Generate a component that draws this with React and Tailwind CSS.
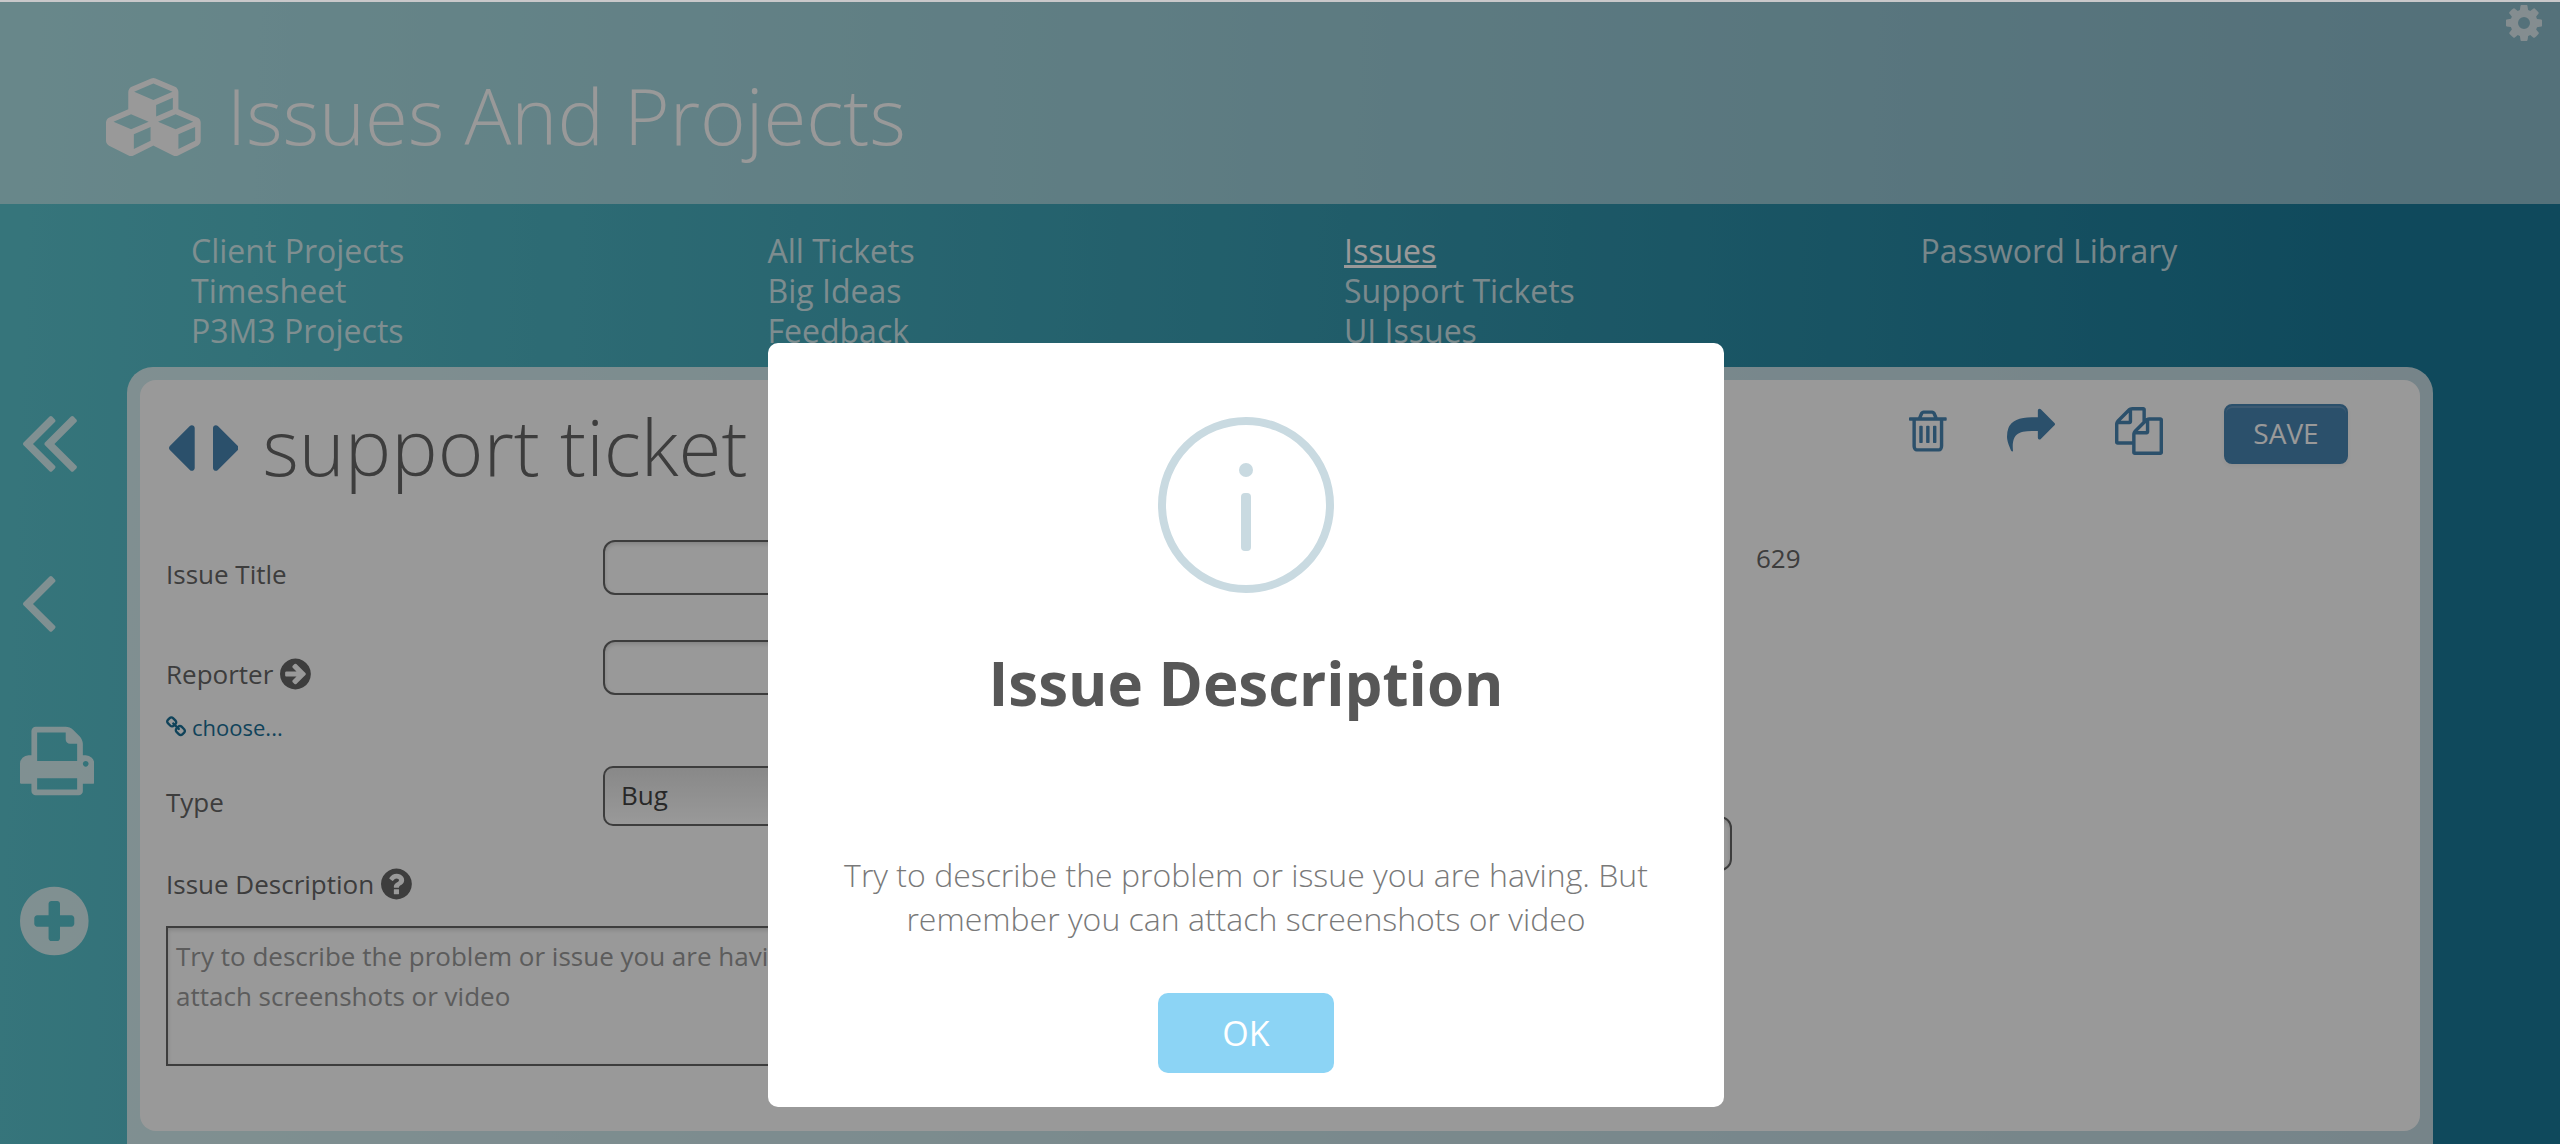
import React, { useState } from 'react';

const disc =
  'M1664 896q0 209-103 385.5t-279.5 279.5-385.5 103-385.5-103-279.5-279.5-103-385.5 103-385.5 279.5-279.5 385.5-103 385.5 103 279.5 279.5 103 385.5z';

// [viewBox, path]
const icons = {
  cubes: ['0 0 2176 1792', 'M640 1632l384-192v-314l-384 164v342zm-64-454l404-173-404-173-404 173zm1088 454l384-192v-314l-384 164v342zm-64-454l404-173-404-173-404 173zm-448-293l384-165v-266l-384 164v267zm-64-379l441-189-441-189-441 189zm1088 518v416q0 36-19 67t-52 47l-448 224q-25 14-57 14t-57-14l-448-224q-4-2-7-4-2 2-7 4l-448 224q-25 14-57 14t-57-14l-448-224q-33-16-52-47t-19-67v-416q0-38 21.5-70t56.5-48l434-186v-400q0-38 21.5-70t56.5-48l448-192q23-10 50-10t50 10l448 192q35 16 56.5 48t21.5 70v400l434 186q36 16 57 48t21 70z'],
  cog: ['128 0 1536 1792', 'M1152 896q0-106-75-181t-181-75-181 75-75 181 75 181 181 75 181-75 75-181zm512-109v222q0 12-8 23t-20 13l-185 28q-19 54-39 91 35 50 107 138 10 12 10 25t-9 23q-27 37-99 108t-94 71q-12 0-26-9l-138-108q-44 23-91 38-16 136-29 186-7 28-36 28h-222q-14 0-24.5-8.5t-11.5-21.5l-28-184q-49-16-90-37l-141 107q-10 9-25 9-14 0-25-11-126-114-165-168-7-10-7-23 0-12 8-23 15-21 51-66.5t54-70.5q-27-50-41-99l-183-27q-13-2-21-12.5t-8-23.5v-222q0-12 8-23t19-13l186-28q14-46 39-92-40-57-107-138-10-12-10-24 0-10 9-23 26-36 98.5-107.5t94.5-71.5q13 0 26 10l138 107q44-23 91-38 16-136 29-186 7-28 36-28h222q14 0 24.5 8.5t11.5 21.5l28 184q49 16 90 37l142-107q9-9 24-9 13 0 25 10 129 119 165 170 7 8 7 22 0 12-8 23-15 21-51 66.5t-54 70.5q26 50 41 98l183 28q13 2 21 12.5t8 23.5z'],
  angleDoubleLeft: ['535 191 1088 1434', 'M1171 1376q0 13-10 23l-50 50q-10 10-23 10t-23-10l-466-466q-10-10-10-23t10-23l466-466q10-10 23-10t23 10l50 50q10 10 10 23t-10 23l-393 393 393 393q10 10 10 23zm384 0q0 13-10 23l-50 50q-10 10-23 10t-23-10l-466-466q-10-10-10-23t10-23l466-466q10-10 23-10t23 10l50 50q10 10 10 23t-10 23l-393 393 393 393q10 10 10 23z'],
  angleLeft: ['567 191 700 1434', 'M1203 544q0 13-10 23l-393 393 393 393q10 10 10 23t-10 23l-50 50q-10 10-23 10t-23-10l-466-466q-10-10-10-23t10-23l466-466q10-10 23-10t23 10l50 50q10 10 10 23z'],
  print: ['64 0 1664 1792', 'M448 1536h896v-256h-896v256zm0-640h896v-384h-160q-40 0-68-28t-28-68v-160h-640v640zm1152 64q0-26-19-45t-45-19-45 19-19 45 19 45 45 19 45-19 19-45zm128 0v416q0 13-9.5 22.5t-22.5 9.5h-224v160q0 40-28 68t-68 28h-960q-40 0-68-28t-28-68v-160h-224q-13 0-22.5-9.5t-9.5-22.5v-416q0-79 56.5-135.5t135.5-56.5h64v-544q0-40 28-68t68-28h672q40 0 88 20t76 48l152 152q28 28 48 76t20 88v256h64q79 0 135.5 56.5t56.5 135.5z'],
  plusCircle: ['128 0 1536 1792', 'M1344 960v-128q0-26-19-45t-45-19h-256v-256q0-26-19-45t-45-19h-128q-26 0-45 19t-19 45v256h-256q-26 0-45 19t-19 45v128q0 26 19 45t45 19h256v256q0 26 19 45t45 19h128q26 0 45-19t19-45v-256h256q26 0 45-19t19-45z' + disc],
  caretLeft: ['640 0 576 1792', 'M1216 448v896q0 26-19 45t-45 19-45-19l-448-448q-19-19-19-45t19-45l448-448q19-19 45-19t45 19 19 45z'],
  caretRight: ['576 0 576 1792', 'M1152 896q0 26-19 45l-448 448q-19 19-45 19t-45-19-19-45v-896q0-26 19-45t45-19 45 19l448 448q19 19 19 45z'],
  arrowCircle: ['128 0 1536 1792', 'M1413 896q0-27-18-45l-91-91-362-362q-18-18-45-18t-45 18l-91 91q-18 18-18 45t18 45l189 189h-502q-26 0-45 19t-19 45v128q0 26 19 45t45 19h502l-189 189q-19 19-19 45t19 45l91 91q18 18 45 18t45-18l362-362 91-91q18-18 18-45z' + disc],
  questionCircle: ['128 0 1536 1792', 'M1024 1376v-192q0-14-9-23t-23-9h-192q-14 0-23 9t-9 23v192q0 14 9 23t23 9h192q14 0 23-9t9-23zm256-672q0-88-55.5-163t-138.5-116-170-41q-243 0-371 213-15 24 8 42l132 100q7 6 19 6 16 0 25-12 53-68 86-92 34-24 86-24 48 0 85.5 26t37.5 59q0 38-20 61t-68 45q-63 28-115.5 86.5t-52.5 125.5v36q0 14 9 23t23 9h192q14 0 23-9t9-23q0-19 21.5-49.5t54.5-49.5q32-18 49-28.5t46-35 44.5-48 28-60.5 12.5-81z' + disc],
  link: ['80 0 1632 1792', 'M1520 1216q0-40-28-68l-208-208q-28-28-68-28-42 0-72 32 3 3 19 18.5t21.5 21.5 15 19 13 25.5 3.5 27.5q0 40-28 68t-68 28q-15 0-27.5-3.5t-25.5-13-19-15-21.5-21.5-18.5-19q-33 31-33 73 0 40 28 68l206 207q27 27 68 27 40 0 68-26l147-146q28-28 28-67zm-703-705q0-40-28-68l-206-207q-28-28-68-28-39 0-68 27l-147 146q-28 28-28 67 0 40 28 68l208 208q27 27 68 27 42 0 72-31-3-3-19-18.5t-21.5-21.5-15-19-13-25.5-3.5-27.5q0-40 28-68t68-28q15 0 27.5 3.5t25.5 13 19 15 21.5 21.5 18.5 19q33-31 33-73zm895 705q0 120-85 203l-147 146q-83 83-203 83-121 0-204-85l-206-207q-83-83-83-203 0-123 88-209l-88-88q-86 88-208 88-120 0-204-84l-208-208q-84-84-84-204t85-203l147-146q83-83 203-83 121 0 204 85l206 207q83 83 83 203 0 123-88 209l88 88q86-88 208-88 120 0 204 84l208 208q84 84 84 204z'],
  trash: ['192 0 1408 1792', 'M704 736v576q0 14-9 23t-23 9h-64q-14 0-23-9t-9-23v-576q0-14 9-23t23-9h64q14 0 23 9t9 23zm256 0v576q0 14-9 23t-23 9h-64q-14 0-23-9t-9-23v-576q0-14 9-23t23-9h64q14 0 23 9t9 23zm256 0v576q0 14-9 23t-23 9h-64q-14 0-23-9t-9-23v-576q0-14 9-23t23-9h64q14 0 23 9t9 23zm128 724v-948h-896v948q0 22 7 40.5t14.5 27 10.5 8.5h832q3 0 10.5-8.5t14.5-27 7-40.5zm-672-1076h448l-48-117q-7-9-17-11h-317q-10 2-17 11zm928 32v64q0 14-9 23t-23 9h-96v948q0 83-47 143.5t-113 60.5h-832q-66 0-113-58.5t-47-141.5v-952h-96q-14 0-23-9t-9-23v-64q0-14 9-23t23-9h309l70-167q15-37 54-63t79-26h320q40 0 79 26t54 63l70 167h309q14 0 23 9t9 23z'],
  share: ['0 0 1792 1792', 'M1792 640q0 26-19 45l-512 512q-19 19-45 19t-45-19-19-45v-256h-224q-98 0-175.5 6t-154 21.5-133 42.5-105.5 69.5-80 101-48.5 138.5-17.5 181q0 55 5 123 0 6 2.5 23.5t2.5 26.5q0 15-8.5 25t-23.5 10q-16 0-28-17-7-9-13-22t-13.5-30-10.5-24q-127-285-127-451 0-199 53-333 162-403 875-403h224v-256q0-26 19-45t45-19 45 19l512 512q19 19 19 45z'],
  files: ['0 0 1792 1792', 'M1696 384q40 0 68 28t28 68v1216q0 40-28 68t-68 28h-960q-40 0-68-28t-28-68v-288h-544q-40 0-68-28t-28-68v-672q0-40 20-88t48-76l408-408q28-28 76-48t88-20h416q40 0 68 28t28 68v328q68-40 128-40h416zm-544 213l-299 299h299v-299zm-640-384l-299 299h299v-299zm196 647l316-316v-416h-384v416q0 40-28 68t-68 28h-416v640h512v-256q0-40 20-88t48-76zm956 804v-1152h-384v416q0 40-28 68t-68 28h-416v640h896z'],
};

const menu = [
  ['Client Projects', 'Timesheet', 'P3M3 Projects'],
  ['All Tickets', 'Big Ideas', 'Feedback'],
  ['Issues', 'Support Tickets', 'UI Issues'],
  ['Password Library'],
];

const hint =
  'Try to describe the problem or issue you are having. But remember you can attach screenshots or video';

const Icon = ({ name, className }) => {
  const [viewBox, d] = icons[name];
  return (
    <svg viewBox={viewBox} className={className} fill="currentColor" aria-hidden="true">
      <path fillRule="evenodd" d={d} />
    </svg>
  );
};

const IconButton = ({ name, label, size }) => (
  <button type="button" aria-label={label} className="block">
    <Icon name={name} className={size} />
  </button>
);

const inputClass =
  'w-full h-[55px] rounded-xl border-2 border-[#666] bg-white px-4 shadow-[inset_0_2px_4px_rgba(0,0,0,0.15)]';

const App = () => {
  const [open, setOpen] = useState(true);
  const [title, setTitle] = useState('');
  const [reporter, setReporter] = useState('');
  const [type, setType] = useState('Bug');
  const [description, setDescription] = useState('');
  const [date, setDate] = useState('');

  return (
    <div className="flex min-h-screen flex-col border-t-2 border-[#c9c8ca] font-['Open_Sans',sans-serif] text-[26px] leading-10 text-[#666]">
      <div className="relative flex flex-1 flex-col bg-[linear-gradient(92deg,#5bc4ce_0%,#1a7a99_92%,#1a7a99_100%)]">
        <header className="flex h-[202px] items-start bg-white/50 text-white">
          <Icon name="cubes" className="mt-[76px] ml-[106px] h-[78px]" />
          <h1 className="mt-[59px] ml-[26px] flex-1 text-[78px] leading-[108px] font-light">Issues And Projects</h1>
          <div className="mr-[18px] text-white/70">
            <IconButton name="cog" label="Settings" size="h-[42px]" />
          </div>
        </header>

        <nav className="grid grid-cols-4 px-[127px] pt-[27px] pb-4 text-[32px] text-white/75">
          {menu.map((column) => (
            <ul key={column[0]} className="pl-16">
              {column.map((item) => (
                <li key={item}>
                  <a href="#" className={item === 'Issues' ? 'font-medium text-white underline' : ''}>
                    {item}
                  </a>
                </li>
              ))}
            </ul>
          ))}
        </nav>

        <div className="flex flex-1 pr-[127px]">
          <aside className="flex w-[127px] flex-col items-start gap-20 pt-[34px] pl-5 text-white/75">
            <IconButton name="angleDoubleLeft" label="First" size="h-20" />
            <IconButton name="angleLeft" label="Back" size="h-20" />
            <IconButton name="print" label="Print" size="h-20" />
            <IconButton name="plusCircle" label="Add" size="h-20" />
          </aside>

          <main className="flex-1 rounded-t-[26px] bg-white/75 p-[13px]">
            <div className="min-h-[751px] rounded-2xl bg-white px-[26px] pt-6">
              <div className="flex h-[109px] items-start text-[#4985b3]">
                <div className="mt-1 flex gap-[18px] pl-[3px]">
                  <IconButton name="caretLeft" label="Previous ticket" size="h-20" />
                  <IconButton name="caretRight" label="Next ticket" size="h-20" />
                </div>
                <h2 className="ml-6 flex-1 text-[78px] leading-[84px] font-light text-[#666]">support ticket</h2>
                <div className="flex items-start gap-[61px] pr-[46px]">
                  <div className="flex gap-[60px] pt-[3px]">
                    <IconButton name="trash" label="Delete" size="h-12" />
                    <IconButton name="share" label="Share" size="h-12" />
                    <IconButton name="files" label="Copy" size="h-12" />
                  </div>
                  <button
                    type="button"
                    className="h-[60px] w-[124px] rounded-lg border-2 border-[#4985b3] bg-[#4985b3] pb-0.5 text-[28px] text-white shadow-[inset_0_2px_0_rgba(255,255,255,0.15),0_2px_4px_rgba(0,0,0,0.05)]"
                  >
                    SAVE
                  </button>
                </div>
              </div>

              <form className="flex gap-[194px]" onSubmit={(e) => e.preventDefault()}>
                <div className="w-[960px]">
                  <div className="flex h-[100px] items-start pt-[27px]">
                    <label htmlFor="title" className="w-[437px] pt-[14px]">
                      Issue Title
                    </label>
                    <div className="flex-1">
                      <input id="title" className={inputClass} value={title} onChange={(e) => setTitle(e.target.value)} />
                    </div>
                  </div>
                  <div className="flex h-[94px] items-start pt-[27px]">
                    <label htmlFor="reporter" className="flex w-[437px] items-center gap-[7px] pt-[14px]">
                      Reporter
                      <Icon name="arrowCircle" className="h-9" />
                    </label>
                    <div className="flex-1">
                      <input
                        id="reporter"
                        className={inputClass}
                        value={reporter}
                        onChange={(e) => setReporter(e.target.value)}
                      />
                    </div>
                  </div>
                  <a href="#" className="flex items-center gap-[6px] text-[22px] text-[#1b7097]">
                    <Icon name="link" className="h-[22px]" />
                    choose...
                  </a>
                  <div className="flex items-start pt-[19px]">
                    <label htmlFor="type" className="w-[437px] pt-4">
                      Type
                    </label>
                    <select
                      id="type"
                      className="h-[60px] flex-1 appearance-none rounded-[10px] border-2 border-[#666] bg-linear-to-b from-[#e4e4e4] to-white px-4 pb-0.5 text-[#444]"
                      value={type}
                      onChange={(e) => setType(e.target.value)}
                    >
                      <option>Bug</option>
                    </select>
                  </div>
                  <label htmlFor="description" className="flex items-center gap-[7px] pt-[38px]">
                    Issue Description
                    <Icon name="questionCircle" className="h-9" />
                  </label>
                  <textarea
                    id="description"
                    className="mt-[22px] block h-[140px] w-full resize-none border-2 border-[#666] p-2 placeholder:text-[#999] shadow-[inset_0_2px_4px_rgba(0,0,0,0.15)]"
                    placeholder={hint}
                    value={description}
                    onChange={(e) => setDescription(e.target.value)}
                  />
                </div>
                <div className="flex-1">
                  <p className="pt-[25px] pl-[436px]">629</p>
                  <div className="mt-[238px] w-[412px]">
                    <input aria-label="Date" className={inputClass} value={date} onChange={(e) => setDate(e.target.value)} />
                  </div>
                </div>
              </form>
            </div>
          </main>
        </div>

        {open && (
          <div className="absolute inset-0 bg-black/40">
            <div
              role="dialog"
              aria-labelledby="dialog-title"
              className="absolute top-[341px] left-1/2 ml-[-512px] w-[956px] rounded-[10px] bg-white p-[34px] text-center"
            >
              <div className="mx-auto mt-10 flex size-44 flex-col items-center rounded-full border-8 border-[#c9dae1] pt-[38px]">
                <span className="size-[14px] rounded-full bg-[#c9dae1]" />
                <span className="mt-4 h-[58px] w-[10px] rounded-sm bg-[#c9dae1]" />
              </div>
              <h2 id="dialog-title" className="mt-[50px] text-[60px] leading-20 font-bold text-[#575757]">
                Issue Description
              </h2>
              <p className="mt-[130px] text-[32px] leading-11 font-light text-[#797979]">{hint}</p>
              <button
                type="button"
                className="mt-[52px] h-20 w-44 rounded-[10px] bg-[#8cd4f5] text-[34px] text-white"
                onClick={() => setOpen(false)}
              >
                OK
              </button>
            </div>
          </div>
        )}
      </div>
    </div>
  );
};

export default App;
